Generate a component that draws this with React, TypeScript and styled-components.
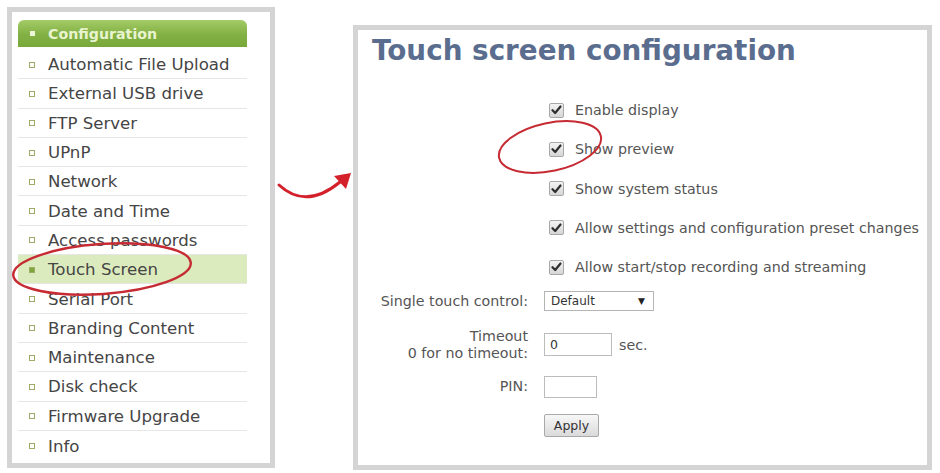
import React from "react";
import styled, { createGlobalStyle } from "styled-components";

const Global = createGlobalStyle`
  html, body { margin: 0; padding: 0; background: #ffffff; }
  body { font-family: "DejaVu Sans", Verdana, sans-serif; }
`;

const Page = styled.div`
  position: relative;
  width: 940px;
  height: 473px;
  box-sizing: border-box;
  padding: 7px;
  display: flex;
  align-items: flex-start;
  gap: 78px;
  background: #ffffff;
  overflow: hidden;
`;

const SidePanel = styled.nav`
  width: 268px;
  height: 461px;
  box-sizing: border-box;
  border: 5px solid #d4d4d4;
  padding: 8px 23px 0 6px;
  background: #fff;
`;

const MenuHeader = styled.div`
  height: 27px;
  margin-bottom: 3px;
  display: flex;
  align-items: center;
  gap: 13px;
  padding-left: 12px;
  border-radius: 6px 6px 0 0;
  background: linear-gradient(#a3cb66, #82b044 55%, #78a83a);
  color: #e9f4cf;
  font-weight: bold;
  font-size: 14.2px;
`;

const HeaderDot = styled.span`
  width: 5px;
  height: 5px;
  background: #eef6d8;
`;

const MenuList = styled.ul`
  list-style: none;
  margin: 0;
  padding: 0;
`;

const MenuItem = styled.li<{ $active?: boolean }>`
  height: 29.3px;
  box-sizing: border-box;
  display: flex;
  align-items: center;
  gap: 13px;
  padding-left: 11px;
  padding-top: 1px;
  border-bottom: 1px solid #e6e6e6;
  background: ${(p) => (p.$active ? "#dcebbd" : "transparent")};
  color: #454545;
  font-size: 16.6px;
  &:last-child { border-bottom: none; }
`;

const Bullet = styled.span<{ $active?: boolean }>`
  width: 6px;
  height: 6px;
  box-sizing: border-box;
  border: 1px solid #9eaa66;
  background: ${(p) => (p.$active ? "#7aa63c" : "#fff")};
  flex: none;
`;

const MainPanel = styled.section`
  margin-top: 18px;
  width: 579px;
  height: 445px;
  box-sizing: border-box;
  border: 5px solid #d4d4d4;
  padding-top: 5px;
  background: #fff;
`;

const Title = styled.h1`
  margin: 0 0 0 14px;
  font-size: 27.8px;
  line-height: 32px;
  font-weight: bold;
  color: #5a6d8e;
`;

const Form = styled.div`
  margin-top: 23.5px;
  display: grid;
  grid-template-columns: 170px auto;
  grid-template-rows: repeat(5, 39.25px) 29px 58px 26px 52px;
  column-gap: 16px;
  align-items: center;
  font-size: 14.25px;
  color: #555;
`;

const Label = styled.div`
  justify-self: end;
  text-align: right;
  line-height: 17px;
`;

const CheckRow = styled.label`
  grid-column: 2;
  display: flex;
  align-items: center;
  gap: 11px;
  padding-left: 5px;
  white-space: nowrap;
`;

const CheckBox = styled.span`
  width: 15px;
  height: 15px;
  box-sizing: border-box;
  border: 1px solid #a8a8a8;
  border-radius: 2px;
  background: linear-gradient(#f3f3f3, #d6d6d6);
  display: flex;
  align-items: center;
  justify-content: center;
  flex: none;
`;

const Controls = styled.div`
  display: flex;
  align-items: center;
  gap: 7px;
`;

const Select = styled.div`
  width: 110px;
  height: 20px;
  box-sizing: border-box;
  border: 1px solid #b4b4b4;
  display: flex;
  align-items: center;
  justify-content: space-between;
  padding: 0 8px 0 6px;
  font-size: 12px;
  color: #333;
  background: #fff;
`;

const Caret = styled.span`
  font-size: 9px;
  color: #222;
`;

const TextBox = styled.div<{ $w: number; $h: number }>`
  width: ${(p) => p.$w}px;
  height: ${(p) => p.$h}px;
  box-sizing: border-box;
  border: 1px solid #bcbcbc;
  padding-left: 5px;
  display: flex;
  align-items: center;
  font-size: 12.5px;
  color: #333;
  background: #fff;
`;

const Button = styled.button`
  width: 55px;
  height: 23px;
  box-sizing: border-box;
  border: 1px solid #a9a9a9;
  border-radius: 2px;
  background: linear-gradient(#f7f7f7, #dadada);
  font-family: "DejaVu Sans", Verdana, sans-serif;
  font-size: 12.5px;
  color: #333;
  padding: 0;
`;

const Annotations = styled.svg`
  position: absolute;
  left: 0;
  top: 0;
  pointer-events: none;
`;

const Check = () => (
  <svg width="11" height="10" viewBox="0 0 11 10">
    <path d="M1.5 5.2 L4.2 8 L9.5 1.5" fill="none" stroke="#2e2e2e" strokeWidth="2.2" strokeLinecap="round" strokeLinejoin="round" />
  </svg>
);

const menu = [
  "Automatic File Upload",
  "External USB drive",
  "FTP Server",
  "UPnP",
  "Network",
  "Date and Time",
  "Access passwords",
  "Touch Screen",
  "Serial Port",
  "Branding Content",
  "Maintenance",
  "Disk check",
  "Firmware Upgrade",
  "Info",
];

const checks = [
  "Enable display",
  "Show preview",
  "Show system status",
  "Allow settings and configuration preset changes",
  "Allow start/stop recording and streaming",
];

export default function App() {
  return (
    <>
      <Global />
      <Page>
        <SidePanel>
          <MenuHeader>
            <HeaderDot />
            Configuration
          </MenuHeader>
          <MenuList>
            {menu.map((m) => (
              <MenuItem key={m} $active={m === "Touch Screen"}>
                <Bullet $active={m === "Touch Screen"} />
                {m}
              </MenuItem>
            ))}
          </MenuList>
        </SidePanel>
        <MainPanel>
          <Title>Touch screen configuration</Title>
          <Form>
            {checks.map((c) => (
              <CheckRow key={c}>
                <CheckBox>
                  <Check />
                </CheckBox>
                {c}
              </CheckRow>
            ))}
            <Label>Single touch control:</Label>
            <Controls>
              <Select>
                Default
                <Caret>▼</Caret>
              </Select>
            </Controls>
            <Label>
              Timeout
              <br />0 for no timeout:
            </Label>
            <Controls>
              <TextBox $w={68} $h={23}>0</TextBox>
              sec.
            </Controls>
            <Label>PIN:</Label>
            <Controls>
              <TextBox $w={53} $h={22} />
            </Controls>
            <div />
            <Controls>
              <Button>Apply</Button>
            </Controls>
          </Form>
        </MainPanel>
        <Annotations width="940" height="473" viewBox="0 0 940 473">
          <ellipse cx="102" cy="269" rx="89" ry="25" transform="rotate(-4 102 269)" fill="none" stroke="#c62a32" strokeWidth="2.4" />
          <ellipse cx="550" cy="147" rx="52" ry="24" transform="rotate(-12 550 147)" fill="none" stroke="#c62a32" strokeWidth="2" />
          <path d="M279 185 Q306 210 340 182" fill="none" stroke="#d4202a" strokeWidth="3" strokeLinecap="round" />
          <path d="M351 173 L334 176 L346 189 Z" fill="#d4202a" />
        </Annotations>
      </Page>
    </>
  );
}
